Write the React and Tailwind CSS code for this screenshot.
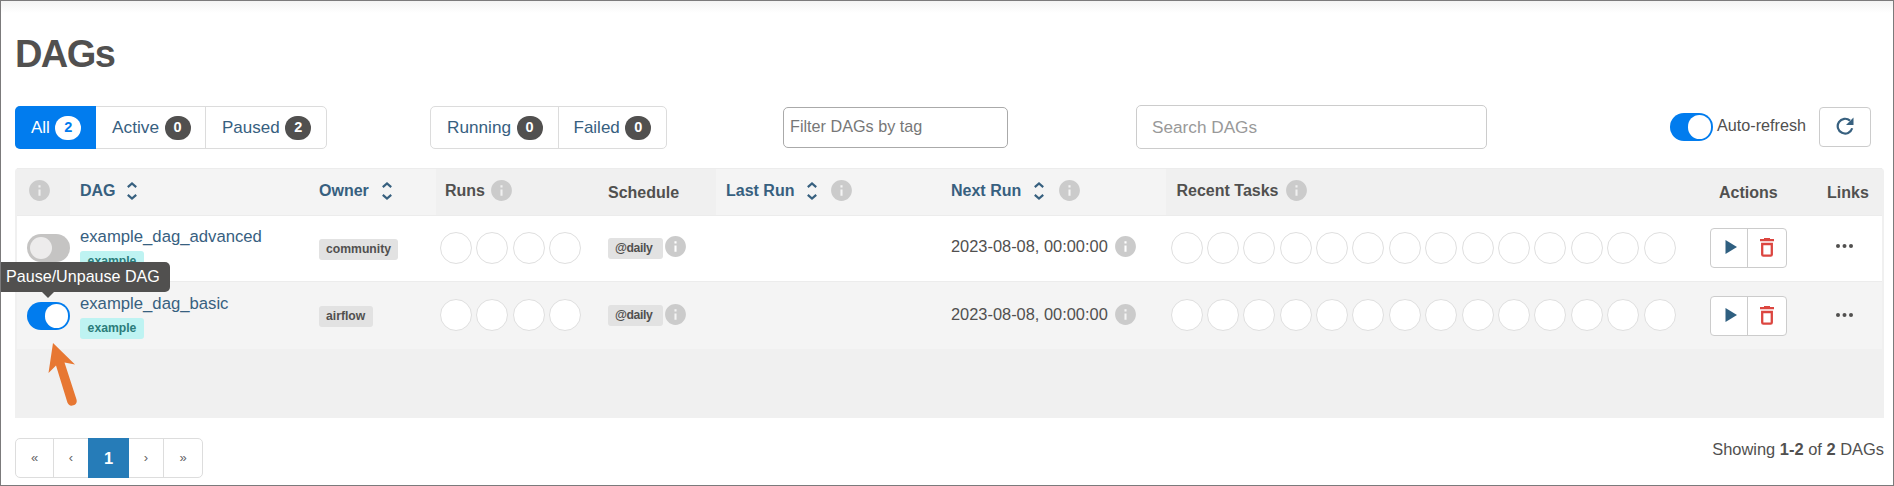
import React from 'react';

const Info = ({ className = '' }) => (
  <svg viewBox="0 0 24 24" className={`size-[25px] -m-[2px] shrink-0 ${className}`} fill="#cbcbcb">
    <path d="M12 2C6.48 2 2 6.48 2 12s4.48 10 10 10 10-4.48 10-10S17.52 2 12 2zm1 15h-2v-6h2v6zm0-8h-2V7h2v2z" />
  </svg>
);

const Sort = ({ className = '' }) => (
  <svg viewBox="0 0 10 18" className={`h-[18px] w-[10px] shrink-0 ${className}`} fill="none" stroke="#37607f" strokeWidth="2.2">
    <path d="M0.8 5.2 5 1.5l4.2 3.7M0.8 12.8 5 16.5l4.2-3.7" />
  </svg>
);

const Switch = ({ on }) => (
  <div className={`flex h-7 w-[43px] shrink-0 items-center rounded-full ${on ? 'justify-end bg-[#017cee] px-[2px]' : 'bg-[#c5c4c3] px-[3px]'}`}>
    <div className={`rounded-full ${on ? 'h-6 w-[23px] bg-white' : 'size-[22px] bg-[#edecec]'}`} />
  </div>
);

const Count = ({ children, light }) => (
  <span className={`ml-[5.5px] flex h-6 w-[26px] items-center justify-center rounded-full text-[14.5px] font-bold ${light ? 'bg-white text-[#017cee]' : 'bg-[#51504f] text-white'}`}>
    {children}
  </span>
);

const Circles = ({ n }) => (
  <div className="flex gap-[4.4px]">
    {Array.from({ length: n }, (_, i) => (
      <div key={i} className="size-8 shrink-0 rounded-full border border-[#dfdfdf] bg-white" />
    ))}
  </div>
);

const Tag = ({ children, className = '' }) => (
  <span className={`flex h-[21px] items-center rounded-[3px] bg-[#e2e2e2] px-[7px] text-[12.2px] font-bold text-[#51504f] ${className}`}>{children}</span>
);

const cols = 'grid grid-cols-[53px_239px_127px_162px_118px_225px_225px_524px_119px_75px]';

function Row({ name, owner, on, ownerWidth, children }) {
  return (
    <div className={`${cols} border-t border-[#ececec] ${on ? 'h-[68px] bg-[#f4f4f4]' : 'h-[66px] bg-white'}`}>
      <div className={`relative pl-[10px] ${on ? 'pt-5' : 'pt-[18px]'}`}>
        <Switch on={on} />
        {children}
      </div>
      <div className={`pl-[10px] ${on ? 'pt-[11px]' : 'pt-[10px]'}`}>
        <div className="h-[22px] text-[16.7px] leading-[22px] text-[#37607f]">{name}</div>
        <div className="mt-[3px] flex h-[21px] w-16 items-center justify-center rounded-[3px] bg-[#bef3f2] text-[12.2px] font-bold text-[#2b7c7a]">example</div>
      </div>
      <div className={`pl-[10px] ${on ? 'pt-6' : 'pt-[23px]'}`}><Tag className={ownerWidth}>{owner}</Tag></div>
      <div className={`pl-1 ${on ? 'pt-[17px]' : 'pt-4'}`}><Circles n={4} /></div>
      <div className={`flex items-start pl-[10px] ${on ? 'pt-[22px]' : 'pt-5'}`}>
        <Tag className={on ? 'mt-[1px] w-[55px]' : 'mt-[2px] w-[55px]'}><span className="tracking-[-0.4px]">@daily</span></Tag>
        <Info className="!ml-0" />
      </div>
      <div />
      <div className={`flex items-start pl-[10px] text-[16.4px] leading-[22px] text-[#51504f] ${on ? 'pt-[22px]' : 'pt-5'}`}>
        <span className="-mt-[1px]">2023-08-08, 00:00:00</span><Info className="!ml-[5px] !mt-[-2px]" />
      </div>
      <div className={`pl-[4.5px] ${on ? 'pt-[17px]' : 'pt-4'}`}><Circles n={14} /></div>
      <div className={`pl-5 ${on ? 'pt-[14px]' : 'pt-3'}`}>
        <div className="flex h-10 w-[77px] rounded border border-[#cccccc] bg-white">
          <div className="flex w-[37px] items-center justify-center border-r border-[#cccccc]">
            <svg viewBox="0 0 12 14" className="-mt-[2px] ml-[4px] h-[14px] w-[12px]" fill="#2f5f80"><path d="M0.5 0 12 7 0.5 14z" /></svg>
          </div>
          <div className="flex flex-1 items-center justify-center">
            <svg viewBox="0 0 14 19" className="-mt-[2px] h-[19px] w-[14px]" fill="none" stroke="#dc4640" strokeWidth="2.3">
              <path d="M0 2.100h14M4 1h6M2.200 6h9.600v10.500a1.200 1.200 0 0 1-1.200 1.200H3.400a1.200 1.200 0 0 1-1.200-1.200z" />
            </svg>
          </div>
        </div>
      </div>
      <div className={`flex items-start pl-[27px] ${on ? 'pt-[31px]' : 'pt-[28px]'}`}>
        <svg viewBox="0 0 17 4" className="h-1 w-[17px]" fill="#51504f"><circle cx="2" cy="2" r="2" /><circle cx="8.500" cy="2" r="2" /><circle cx="15" cy="2" r="2" /></svg>
      </div>
    </div>
  );
}

const Th = ({ children, light, className = '' }) => (
  <div className={`flex h-full items-start pl-[10px] pt-[11px] ${light ? 'bg-[#f4f4f4] text-[#37607f]' : 'text-[#51504f]'} ${className}`}>{children}</div>
);

export default function App() {
  return (
    <div className="h-[486px] w-[1894px] overflow-hidden border border-[#7b7a7b] bg-white font-['Liberation_Sans',Arial,sans-serif] text-[#51504f]">
      <div className="h-3 bg-gradient-to-b from-[#f3f3f3] to-white" />
      <div className="pl-[14px]">
        <h1 className="mt-[18px] h-[46px] text-[38px] font-bold leading-[46px] tracking-[-1.600px]">DAGs</h1>

        <div className="mt-[28px] flex h-[45px] items-start">
          <div className="mt-[1px] flex h-[43px] w-[312px] rounded-[5px] border border-[#dcdcdc] text-[17px] text-[#37607f]">
            <div className="-my-px -ml-px flex w-[81px] items-center rounded-l-[5px] bg-[#017cee] pl-4 text-white">All<Count light>2</Count></div>
            <div className="flex w-[110px] items-center border-r border-[#dcdcdc] pl-4 text-[17.300px]">Active<Count>0</Count></div>
            <div className="flex flex-1 items-center pl-4">Paused<Count>2</Count></div>
          </div>
          <div className="ml-[103px] mt-[1px] flex h-[43px] w-[237px] rounded-[5px] border border-[#dcdcdc] text-[17px] text-[#37607f]">
            <div className="flex w-[128px] items-center border-r border-[#dcdcdc] pl-4 text-[17.200px]">Running<Count>0</Count></div>
            <div className="flex flex-1 items-center pl-[14.500px]">Failed<Count>0</Count></div>
          </div>
          <div className="ml-[116px] mt-[2px] h-[41px] w-[225px] rounded-[5px] border border-[#aaaaaa] pl-[6px] text-[16.2px] leading-[36px] text-[#777777]">Filter DAGs by tag</div>
          <div className="ml-[128px] h-[44px] w-[351px] rounded-[5px] border border-[#cccccc] pl-[15px] text-[17.200px] leading-[43px] text-[#999999]">Search DAGs</div>
          <div className="ml-[182.500px] mt-2"><Switch on /></div>
          <div className="ml-[4.500px] mt-[10px] w-[102px] text-[16.2px] leading-[20px]">Auto-refresh</div>
          <div className="mt-[2px] flex h-10 w-[52px] items-center justify-center rounded border border-[#cccccc]">
            <svg viewBox="0 0 18 18" className="-mt-[2px] h-[18px] w-[18px]" fill="none" stroke="#37607f" strokeWidth="2.200">
              <path d="M16.200 11.300A7.400 7.400 0 1 1 14 3.600" /><path d="M17.500 0.500v7.500h-7.500z" fill="#37607f" stroke="none" />
            </svg>
          </div>
        </div>

        <div className="mt-[18px] h-[250px] w-[1869px] rounded-t bg-[#f0f0f0] px-[2px]">
          <div className={`${cols} h-[47px] border-t border-[#ececec] text-[16px] font-bold leading-[21px]`}>
            <Th className="!pl-3"><Info className="!ml-[-2px]" /></Th>
            <Th light>DAG<Sort className="ml-[11px] mt-[2px]" /></Th>
            <Th light>Owner<Sort className="ml-[13px] mt-[2px]" /></Th>
            <Th className="!pl-[9px]">Runs<Info className="!ml-[4px]" /></Th>
            <Th className="!pt-[13px]">Schedule</Th>
            <Th light>Last Run<Sort className="ml-[13px] mt-[2px]" /><Info className="!ml-[12px]" /></Th>
            <Th light>Next Run<Sort className="ml-[13px] mt-[2px]" /><Info className="!ml-[13px]" /></Th>
            <Th className="!pl-[10.500px]">Recent Tasks<Info className="!ml-[6px]" /></Th>
            <Th className="!pl-[29px] !pt-[13px]">Actions</Th>
            <Th className="!pl-[18px] !pt-[13px]">Links</Th>
          </div>
          <Row name="example_dag_advanced" owner="community" ownerWidth="w-[79px]" />
          <Row name="example_dag_basic" owner="airflow" ownerWidth="w-[54px]" on>
            <div className="absolute -left-[17px] -top-[20px] z-10 flex h-[30px] w-[170px] items-center rounded-r-[5px] bg-[#51504f] pl-[6px] pb-[2px] text-[16.1px] leading-[28px] text-white">
              Pause/Unpause DAG
              <svg viewBox="0 0 12 6" className="absolute left-[42px] top-[30px] h-[6px] w-[12px]" fill="#51504f"><path d="M0 0h12L6 6z" /></svg>
            </div>
            <svg viewBox="0 0 30 64" className="absolute left-[31px] top-[60px] h-[64px] w-[30px]" fill="#e77732">
              <path d="M5 1 27 22.500 16.500 20.500 28.500 57.500A4.800 4.800 0 0 1 19.400 60.500L8 23.500 0.500 31z" />
            </svg>
          </Row>
        </div>

        <div className="flex w-[1869px] items-start justify-between pt-5">
          <div className="flex h-10 w-[188px] rounded-[5px] border border-[#dddddd] text-[13px] text-[#666666]">
            <div className="flex w-[38px] items-center justify-center border-r border-[#dddddd]">«</div>
            <div className="flex w-[34px] items-center justify-center">‹</div>
            <div className="-my-px flex w-[41px] items-center justify-center bg-[#267cb8] text-[16.500px] font-bold text-white">1</div>
            <div className="flex w-[35px] items-center justify-center border-r border-[#dddddd]">›</div>
            <div className="flex flex-1 items-center justify-center">»</div>
          </div>
          <div className="text-[16.450px] leading-[22px]">Showing <b>1-2</b> of <b>2</b> DAGs</div>
        </div>
      </div>
    </div>
  );
}
